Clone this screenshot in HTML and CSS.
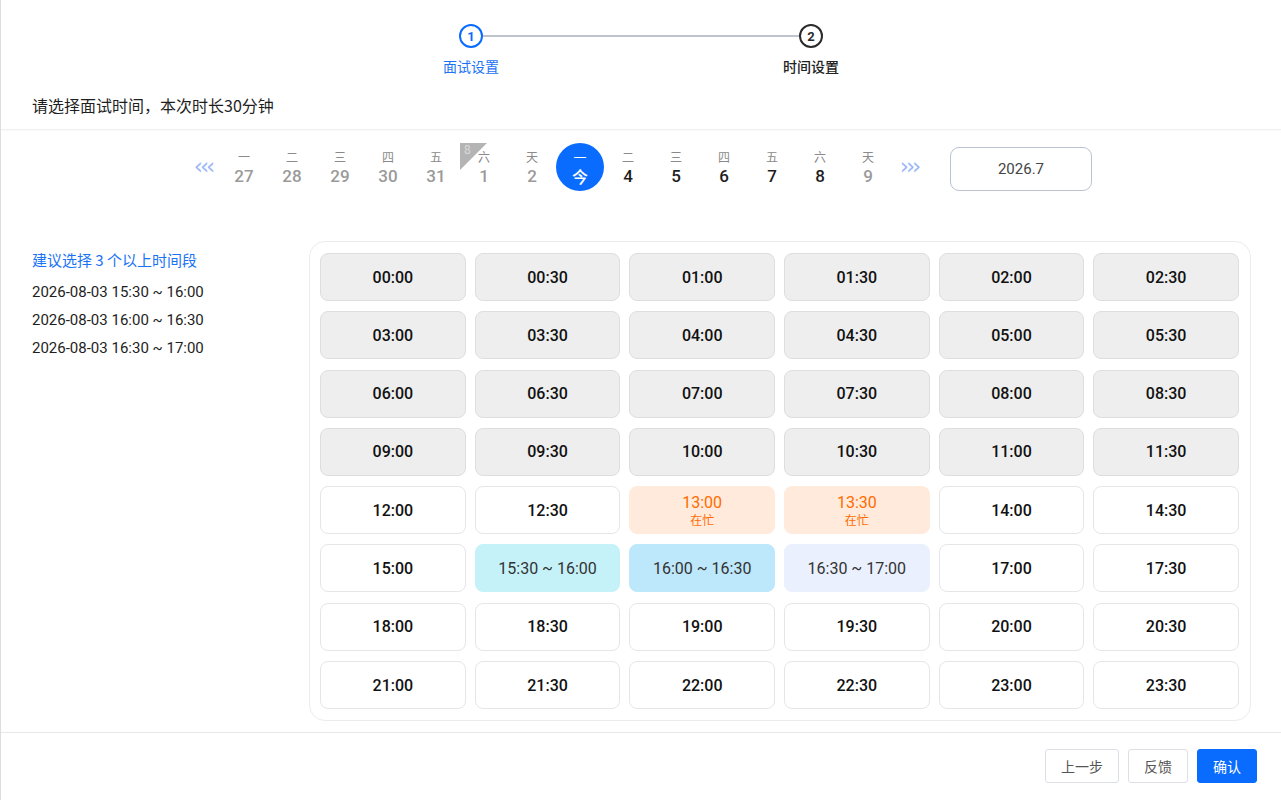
FILE: index.html
```html
<!DOCTYPE html>
<html lang="zh">
<head>
<meta charset="utf-8">
<title>面试时间设置</title>
<link rel="stylesheet" href="styles.css">
</head>
<body>
<div class="page">
  <header class="header">
    <div class="stepper">
      <div class="step-row">
        <span class="dot dot-active">1</span>
        <span class="step-line"></span>
        <span class="dot">2</span>
      </div>
      <div class="label-row">
        <span class="step-label step-label-active">面试设置</span>
        <span class="step-label">时间设置</span>
      </div>
    </div>
    <div class="tip">请选择面试时间，本次时长30分钟</div>
  </header>

  <div class="datebar">
    <span class="arrow">&lsaquo;&lsaquo;&lsaquo;</span>
    <div class="days">
      <div class="day past"><span class="wd">一</span><span class="num">27</span></div>
      <div class="day past"><span class="wd">二</span><span class="num">28</span></div>
      <div class="day past"><span class="wd">三</span><span class="num">29</span></div>
      <div class="day past"><span class="wd">四</span><span class="num">30</span></div>
      <div class="day past"><span class="wd">五</span><span class="num">31</span></div>
      <div class="day past flagged"><span class="flag"><span class="flag-num">8</span></span><span class="wd">六</span><span class="num">1</span></div>
      <div class="day past"><span class="wd">天</span><span class="num">2</span></div>
      <div class="day today"><span class="wd">一</span><span class="num">今</span></div>
      <div class="day"><span class="wd">二</span><span class="num">4</span></div>
      <div class="day"><span class="wd">三</span><span class="num">5</span></div>
      <div class="day"><span class="wd">四</span><span class="num">6</span></div>
      <div class="day"><span class="wd">五</span><span class="num">7</span></div>
      <div class="day"><span class="wd">六</span><span class="num">8</span></div>
      <div class="day past"><span class="wd">天</span><span class="num">9</span></div>
    </div>
    <span class="arrow">&rsaquo;&rsaquo;&rsaquo;</span>
    <div class="month">2026.7</div>
  </div>

  <main class="main">
    <aside class="side">
      <div class="side-title">建议选择 3 个以上时间段</div>
      <div class="side-item">2026-08-03 15:30 ~ 16:00</div>
      <div class="side-item">2026-08-03 16:00 ~ 16:30</div>
      <div class="side-item">2026-08-03 16:30 ~ 17:00</div>
    </aside>
    <section class="slots">
      <div class="slot off">00:00</div>
      <div class="slot off">00:30</div>
      <div class="slot off">01:00</div>
      <div class="slot off">01:30</div>
      <div class="slot off">02:00</div>
      <div class="slot off">02:30</div>
      <div class="slot off">03:00</div>
      <div class="slot off">03:30</div>
      <div class="slot off">04:00</div>
      <div class="slot off">04:30</div>
      <div class="slot off">05:00</div>
      <div class="slot off">05:30</div>
      <div class="slot off">06:00</div>
      <div class="slot off">06:30</div>
      <div class="slot off">07:00</div>
      <div class="slot off">07:30</div>
      <div class="slot off">08:00</div>
      <div class="slot off">08:30</div>
      <div class="slot off">09:00</div>
      <div class="slot off">09:30</div>
      <div class="slot off">10:00</div>
      <div class="slot off">10:30</div>
      <div class="slot off">11:00</div>
      <div class="slot off">11:30</div>
      <div class="slot">12:00</div>
      <div class="slot">12:30</div>
      <div class="slot busy"><span>13:00</span><span class="busy-tag">在忙</span></div>
      <div class="slot busy"><span>13:30</span><span class="busy-tag">在忙</span></div>
      <div class="slot">14:00</div>
      <div class="slot">14:30</div>
      <div class="slot">15:00</div>
      <div class="slot sel sel-a">15:30 ~ 16:00</div>
      <div class="slot sel sel-b">16:00 ~ 16:30</div>
      <div class="slot sel sel-c">16:30 ~ 17:00</div>
      <div class="slot">17:00</div>
      <div class="slot">17:30</div>
      <div class="slot">18:00</div>
      <div class="slot">18:30</div>
      <div class="slot">19:00</div>
      <div class="slot">19:30</div>
      <div class="slot">20:00</div>
      <div class="slot">20:30</div>
      <div class="slot">21:00</div>
      <div class="slot">21:30</div>
      <div class="slot">22:00</div>
      <div class="slot">22:30</div>
      <div class="slot">23:00</div>
      <div class="slot">23:30</div>
    </section>
  </main>

  <footer class="footer">
    <button class="btn">上一步</button>
    <button class="btn">反馈</button>
    <button class="btn btn-primary">确认</button>
  </footer>
</div>
</body>
</html>
```
FILE: styles.css
```css
* { box-sizing: border-box; }
html, body { margin: 0; padding: 0; background: #fff; }
body {
  font-family: Roboto, "Noto Sans CJK SC", sans-serif;
  color: #222;
}
.page {
  width: 1281px;
  height: 800px;
  border-left: 1px solid #dcdde3;
  display: flex;
  flex-direction: column;
  overflow: hidden;
}
.header {
  height: 130px;
  flex: none;
  border-bottom: 1px solid #f0f0f2;
  box-shadow: 0 1px 2px rgba(0,0,0,0.03);
}
.stepper {
  padding-top: 24px;
  display: flex;
  flex-direction: column;
  align-items: center;
}
.step-row {
  display: flex;
  align-items: center;
}
.dot {
  width: 24px;
  height: 24px;
  border-radius: 50%;
  border: 2px solid #2b2b2b;
  color: #2b2b2b;
  font-size: 13px;
  font-weight: 700;
  display: flex;
  align-items: center;
  justify-content: center;
  line-height: 1;
}
.dot-active { border-color: #0a6cff; color: #0a6cff; }
.step-line {
  width: 316px;
  height: 2px;
  background: #bfc3cc;
}
.label-row {
  display: flex;
  gap: 260px;
  margin-top: 8px;
}
.step-label {
  width: 80px;
  text-align: center;
  font-size: 14px;
  line-height: 20px;
  font-family: "Noto Sans CJK SC", sans-serif;
  font-weight: 500;
  color: #222;
}
.step-label-active { color: #1a73f5; font-weight: 400; }
.tip {
  margin-top: 18px;
  padding-left: 31px;
  font-size: 16px;
  line-height: 22px;
  font-family: "Noto Sans CJK SC", sans-serif;
  color: #1f1f1f;
}

.datebar {
  height: 110px;
  flex: none;
  display: flex;
  align-items: flex-start;
  justify-content: center;
  padding-top: 13px;
  padding-right: 4px;
}
.arrow {
  width: 34px;
  height: 48px;
  display: flex;
  align-items: center;
  justify-content: center;
  color: #9db8f6;
  font-size: 23px;
  letter-spacing: -3px;
  font-family: "DejaVu Sans", sans-serif;
  padding-bottom: 3px;
}
.days { display: flex; }
.day {
  position: relative;
  width: 48px;
  height: 48px;
  display: flex;
  flex-direction: column;
  align-items: center;
  justify-content: center;
  gap: 3px;
}
.wd {
  font-family: "Noto Sans CJK SC", sans-serif;
  font-size: 12px;
  line-height: 14px;
  color: #8a8a8a;
}
.num {
  font-size: 17px;
  line-height: 18px;
  font-weight: 500;
  color: #1e1e1e;
}
.past .num { color: #9a9a9a; }
.today {
  background: #0a6cff;
  border-radius: 50%;
}
.today .wd { color: #fff; font-size: 13px; line-height: 14px; }
.today .num { color: #fff; font-family: "Noto Sans CJK SC", sans-serif; font-size: 16px; line-height: 18px; }
.flag {
  position: absolute;
  left: 0;
  top: 0;
  width: 27px;
  height: 27px;
  background: #b4b4b4;
  clip-path: polygon(0 0, 100% 0, 0 100%);
}
.flag-num {
  position: absolute;
  left: 4px;
  top: 0;
  font-size: 12px;
  line-height: 14px;
  color: #d8d8d8;
}
.month {
  margin-left: 24px;
  margin-top: 4px;
  width: 142px;
  height: 44px;
  border: 1px solid #b9c3d3;
  border-radius: 9px;
  display: flex;
  align-items: center;
  justify-content: center;
  font-size: 15px;
  color: #444;
}

.main {
  display: flex;
  height: 492px;
  flex: none;
  padding-top: 1px;
}
.side {
  width: 308px;
  padding-left: 31px;
  padding-top: 8px;
}
.side-title {
  font-family: "Noto Sans CJK SC", sans-serif;
  font-size: 15px;
  line-height: 22px;
  color: #1a73f5;
  margin-bottom: 7px;
}
.side-item {
  font-size: 15px;
  line-height: 28px;
  color: #1e1e1e;
}
.slots {
  width: 942px;
  height: 480px;
  border: 1px solid #ececec;
  border-radius: 16px;
  padding: 11px 11px 10px 10px;
  display: grid;
  grid-template-columns: repeat(6, 1fr);
  grid-template-rows: repeat(8, 48px);
  column-gap: 8.8px;
  row-gap: 10.3px;
}
.slot {
  border: 1px solid #e6e6e6;
  border-radius: 8px;
  background: #fff;
  display: flex;
  flex-direction: column;
  align-items: center;
  justify-content: center;
  font-size: 16px;
  font-weight: 500;
  color: #111;
}
.off { background: #eeeeee; border-color: #dedede; }
.busy {
  background: #ffeadb;
  border-color: #ffeadb;
  color: #ff6a00;
  line-height: 19px;
  font-weight: 400;
}
.busy-tag {
  font-family: "Noto Sans CJK SC", sans-serif;
  font-size: 12px;
  line-height: 16px;
}
.sel { font-weight: 400; color: #333; }
.sel-a { background: #c5f2f9; border-color: #c5f2f9; }
.sel-b { background: #bde7fb; border-color: #bde7fb; }
.sel-c { background: #eaf0fe; border-color: #eaf0fe; }

.footer {
  flex: none;
  border-top: 1px solid #e8e8ea;
  display: flex;
  justify-content: flex-end;
  gap: 9px;
  padding: 16px 24px 0 0;
}
.btn {
  height: 34px;
  padding: 0 15px;
  border: 1px solid #dcdfe6;
  border-radius: 3px;
  background: #fff;
  font-family: "Noto Sans CJK SC", sans-serif;
  font-size: 14px;
  color: #555;
}
.btn-primary {
  background: #0a6cff;
  border-color: #0a6cff;
  color: #fff;
}
```
